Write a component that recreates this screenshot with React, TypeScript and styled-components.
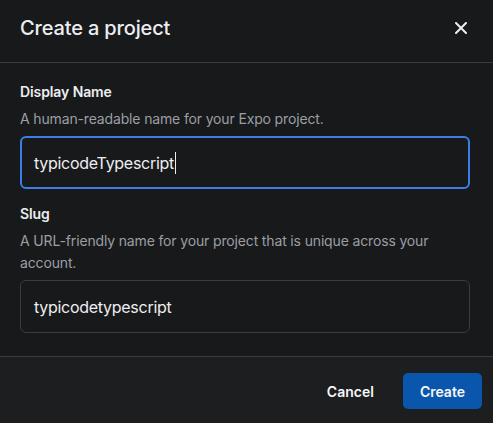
import React from "react";
import styled, { createGlobalStyle } from "styled-components";

const Global = createGlobalStyle`
  html, body { margin: 0; padding: 0; background: #18191b; }
  body { font-family: Inter, "Noto Sans", sans-serif; -webkit-font-smoothing: antialiased; }
  * { box-sizing: border-box; }
`;

const Modal = styled.div`
  width: 493px;
  height: 423px;
  background: #18191b;
  display: flex;
  flex-direction: column;
  overflow: hidden;
`;

const Header = styled.div`
  height: 63px;
  display: flex;
  align-items: center;
  justify-content: space-between;
  padding: 0 26px 6px 20px;
  border-bottom: 1px solid #3a3c3f;
`;

const Title = styled.h2`
  margin: 0;
  font-size: 20px;
  font-weight: 500;
  color: #edeef0;
  letter-spacing: -0.15px;
`;

const CloseButton = styled.button`
  background: none;
  border: none;
  padding: 0;
  display: flex;
  color: #edeef0;
  cursor: pointer;
`;

const Body = styled.div`
  padding: 19px 23px 23px 20px;
  display: flex;
  flex-direction: column;
`;

const Field = styled.div<{ $gap?: number }>`
  display: flex;
  flex-direction: column;
  margin-top: ${(p) => p.$gap ?? 0}px;
`;

const Label = styled.label`
  font-size: 14px;
  font-weight: 600;
  line-height: 20px;
  color: #edeef0;
  letter-spacing: -0.1px;
`;

const Hint = styled.p`
  margin: 6px 0 6px;
  font-size: 14px;
  line-height: 22px;
  color: #9a9fa5;
  letter-spacing: -0.15px;
`;

const InputBox = styled.div<{ $focused?: boolean }>`
  height: 53px;
  display: flex;
  align-items: center;
  border-radius: 6px;
  border: ${(p) => (p.$focused ? "2px solid #3b7ee6" : "1px solid #3a3c3f")};
  padding: 0 13px 0 ${(p) => (p.$focused ? 12 : 13)}px;
  font-size: 16px;
  letter-spacing: -0.28px;
  color: #edeef0;
`;

const Caret = styled.span`
  display: inline-block;
  width: 1px;
  height: 22px;
  background: #edeef0;
  margin-left: 1px;
`;

const Footer = styled.div`
  flex: 1;
  background: #1c1e20;
  border-top: 1px solid #3a3c3f;
  display: flex;
  justify-content: flex-end;
  align-items: flex-start;
  padding: 16px 11px 0 0;
  gap: 12px;
`;

const Button = styled.button<{ $primary?: boolean }>`
  height: 36px;
  padding: 0 17px;
  border: none;
  border-radius: 5px;
  font-family: inherit;
  font-size: 14px;
  font-weight: 600;
  color: #f6f7f8;
  background: ${(p) => (p.$primary ? "#0b56ad" : "transparent")};
  cursor: pointer;
`;

export default function App() {
  return (
    <>
      <Global />
      <Modal>
        <Header>
          <Title>Create a project</Title>
          <CloseButton aria-label="Close">
            <svg width="12" height="12" viewBox="0 0 12 12" fill="none">
              <path d="M1 1L11 11M11 1L1 11" stroke="#edeef0" strokeWidth="2" strokeLinecap="round" />
            </svg>
          </CloseButton>
        </Header>
        <Body>
          <Field>
            <Label>Display Name</Label>
            <Hint>A human-readable name for your Expo project.</Hint>
            <InputBox $focused>
              typicodeTypescript
              <Caret />
            </InputBox>
          </Field>
          <Field $gap={15}>
            <Label>Slug</Label>
            <Hint>A URL-friendly name for your project that is unique across your account.</Hint>
            <InputBox>typicodetypescript</InputBox>
          </Field>
        </Body>
        <Footer>
          <Button>Cancel</Button>
          <Button $primary>Create</Button>
        </Footer>
      </Modal>
    </>
  );
}
